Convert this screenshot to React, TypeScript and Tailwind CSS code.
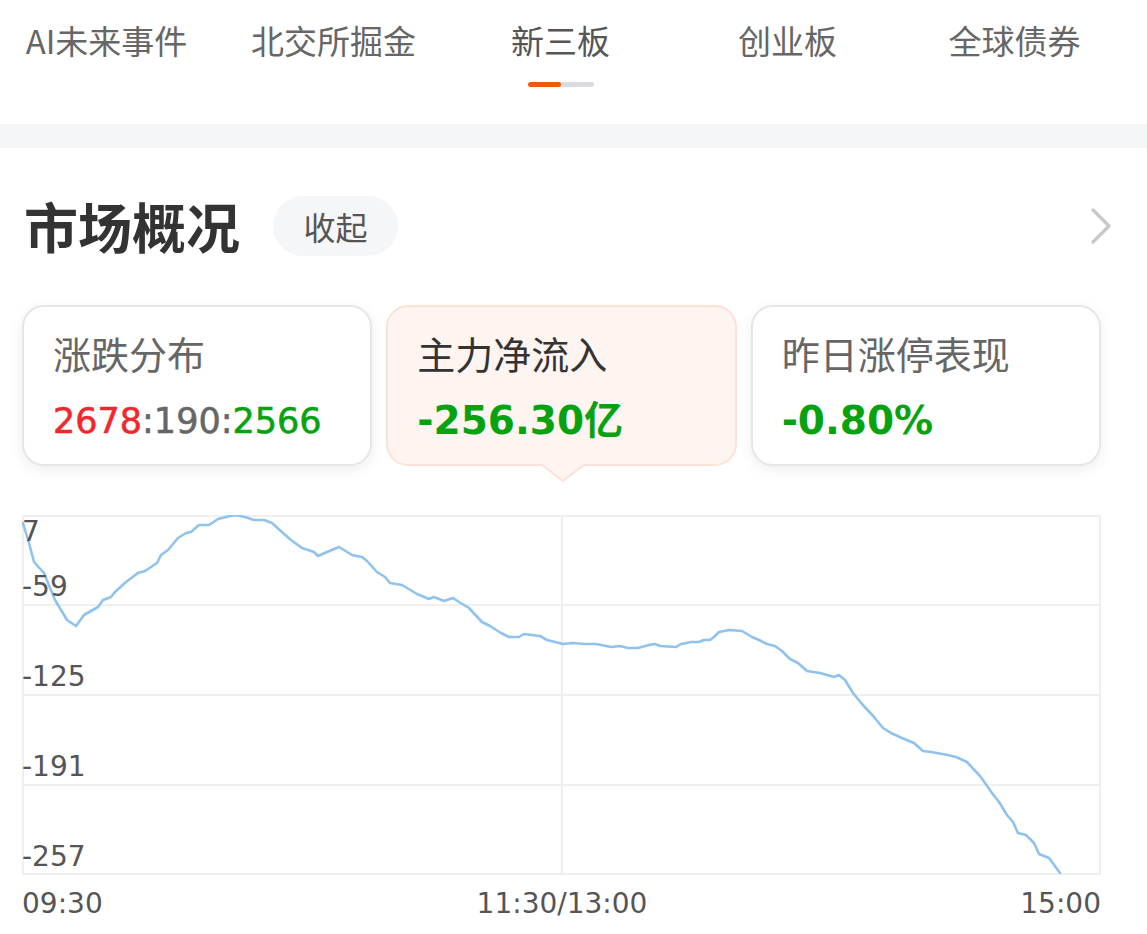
// market overview panel

import React from "react";

const tabs = ["AI未来事件", "北交所掘金", "新三板", "创业板", "全球债券"];

const flowPoints = [
  [23, 523], [29, 543], [34, 562], [44, 573], [48, 583], [55, 600], [67, 620], [76, 626],
  [84, 615], [98, 607], [103, 600], [111, 597], [115, 592], [126, 582], [138, 573], [145, 571],
  [157, 563], [161, 555], [168, 550], [178, 538], [186, 533], [191, 532], [199, 525], [209, 525],
  [218, 519], [226, 517], [235, 515], [245, 517], [254, 520], [264, 520], [272, 523], [283, 533],
  [291, 540], [302, 548], [314, 552], [318, 556], [327, 552], [339, 547], [344, 550], [352, 555],
  [362, 557], [367, 561], [377, 572], [385, 577], [390, 583], [402, 585], [417, 594], [429, 599],
  [434, 597], [444, 601], [453, 598], [459, 602], [469, 608], [482, 622], [490, 626], [501, 633],
  [509, 637], [519, 637], [524, 634], [540, 636], [547, 640], [563, 644], [573, 643], [584, 644],
  [596, 644], [611, 647], [620, 646], [628, 648], [638, 648], [649, 645], [655, 644], [660, 646],
  [676, 647], [681, 644], [691, 642], [699, 642], [704, 640], [710, 640], [714, 637], [719, 632],
  [729, 630], [742, 631], [752, 637], [759, 640], [767, 644], [775, 646], [782, 651], [790, 659],
  [798, 663], [807, 671], [820, 673], [834, 677], [839, 675], [845, 680], [853, 693], [862, 704],
  [874, 717], [883, 728], [891, 733], [902, 738], [914, 743], [923, 751], [931, 752], [948, 755],
  [956, 757], [967, 762], [980, 776], [992, 793], [999, 802], [1007, 815], [1013, 822], [1018, 833],
  [1026, 835], [1034, 843], [1039, 854], [1049, 858], [1060, 873],
];

const yLabels = [
  { text: "7", cls: "top-[0px]" },
  { text: "-59", cls: "top-[55px]" },
  { text: "-125", cls: "top-[145px]" },
  { text: "-191", cls: "top-[235px]" },
  { text: "-257", cls: "top-[325px]" },
];

function Chevron() {
  return (
    <svg width="24" height="38" viewBox="0 0 24 38">
      <polyline points="3,3 19,19 3,35" fill="none" stroke="#c9c9c9" strokeWidth="3.5" strokeLinecap="round" strokeLinejoin="round" />
    </svg>
  );
}

function FlowChart() {
  const pts = flowPoints.map((p) => `${p[0]},${p[1]}`).join(" ");

  return (
    <div className="relative w-[1079px] h-[360px]">
      <svg className="absolute inset-0" width="1079" height="360" viewBox="22 515 1079 360">
        {[516, 605, 695, 785, 874].map((y) => (
          <line key={y} x1="22" x2="1101" y1={y} y2={y} stroke="#efefef" strokeWidth="2" />
        ))}
        <line x1="23" x2="23" y1="515" y2="875" stroke="#efefef" strokeWidth="2" />
        <line x1="562" x2="562" y1="515" y2="875" stroke="#efefef" strokeWidth="2" />
        <line x1="1100" x2="1100" y1="515" y2="875" stroke="#efefef" strokeWidth="2" />
        <polyline points={pts} fill="none" stroke="#8fc3ee" strokeWidth="2.6" strokeLinejoin="round" strokeLinecap="round" />
      </svg>

      {yLabels.map((l) => (
        <div key={l.text} className={`absolute left-[0px] ${l.cls} text-[28px] leading-[34px] text-[#555]`}>
          {l.text}
        </div>
      ))}
    </div>
  );
}

export default function App() {
  return (
    <div className="w-[1147px] h-[934px] bg-white overflow-hidden font-['Noto_Sans_CJK_SC',sans-serif]">

      {/* tabs */}
      <div className="flex -ml-[7px] pt-[18px] h-[124px]">
        {tabs.map((t) => (
          <div key={t} className="w-[227px] flex flex-col items-center shrink-0">
            <span className={`text-[33px] leading-[44px] ${t === "新三板" ? "text-[#555]" : "text-[#666]"}`}>{t}</span>
            {t === "新三板" && (
              <div className="mt-[20px] flex w-[66px] h-[5px] rounded-full overflow-hidden bg-[#d9dbde]">
                <div className="w-[33px] h-full rounded-full bg-[#ee5a12]" />
              </div>
            )}
          </div>
        ))}
      </div>

      <div className="h-[24px] bg-[#f5f6f8]" />

      {/* title */}
      <div className="flex items-center mt-[48px] h-[60px] pl-[24px] w-[1114px]">
        <h2 className="text-[54px] leading-[60px] font-bold text-[#333]">市场概况</h2>
        <div className="ml-[33px] w-[125px] h-[60px] rounded-full bg-[#f5f6f8] flex items-center justify-center text-[32px] text-[#555]">
          收起
        </div>
        <div className="ml-auto flex items-center">
          <Chevron />
        </div>
      </div>

      {/* cards */}
      <div className="grid grid-cols-3 gap-[14px] w-[1079px] ml-[22px] mt-[49px] h-[161px]">
        <div className="rounded-[22px] border-2 border-[#e6e6e6] bg-white shadow-[0_4px_14px_rgba(0,0,0,0.07)] pl-[29px] pt-[22px]">
          <div className="text-[38px] leading-[48px] text-[#666]">涨跌分布</div>
          <div className="mt-[24px] h-[40px] leading-[40px] text-[35px] font-['DejaVu_Sans',sans-serif] [-webkit-text-stroke:0.6px_currentColor]">
            <span className="text-[#f0282d]">2678</span>
            <span className="text-[#666]">:190:</span>
            <span className="text-[#07a20f]">2566</span>
          </div>
        </div>

        <div className="relative rounded-[22px] border-2 border-[#fce2d7] bg-[#fef4f0] pl-[29px] pt-[22px]">
          <div className="text-[38px] leading-[48px] text-[#333]">主力净流入</div>
          <div className="mt-[24px] h-[40px] leading-[40px] text-[39px] font-bold text-[#07a20f] font-['DejaVu_Sans','Noto_Sans_CJK_SC',sans-serif]">
            -256.30亿
          </div>
          <svg className="absolute left-[153px] -bottom-[19px]" width="44" height="20" viewBox="0 0 44 20">
            <polygon points="0,1 22,18 44,1" fill="#fef4f0" />
            <polyline points="0,1 22,18 44,1" fill="none" stroke="#fce2d7" strokeWidth="2" />
          </svg>
        </div>

        <div className="rounded-[22px] border-2 border-[#e6e6e6] bg-white shadow-[0_4px_14px_rgba(0,0,0,0.07)] pl-[29px] pt-[22px]">
          <div className="text-[38px] leading-[48px] text-[#666]">昨日涨停表现</div>
          <div className="mt-[24px] h-[40px] leading-[40px] text-[39px] font-bold text-[#07a20f] font-['DejaVu_Sans',sans-serif]">
            -0.80%
          </div>
        </div>
      </div>

      {/* chart */}
      <div className="ml-[22px] w-[1079px] mt-[49px] font-['DejaVu_Sans',sans-serif]">
        <FlowChart />
        <div className="relative h-[40px] mt-[12px] text-[28px] leading-[34px] text-[#555]">
          <span className="absolute left-[0px] top-0">09:30</span>
          <span className="absolute left-[540px] -translate-x-1/2 top-0">11:30/13:00</span>
          <span className="absolute right-[0px] top-0">15:00</span>
        </div>
      </div>
    </div>
  );
}
